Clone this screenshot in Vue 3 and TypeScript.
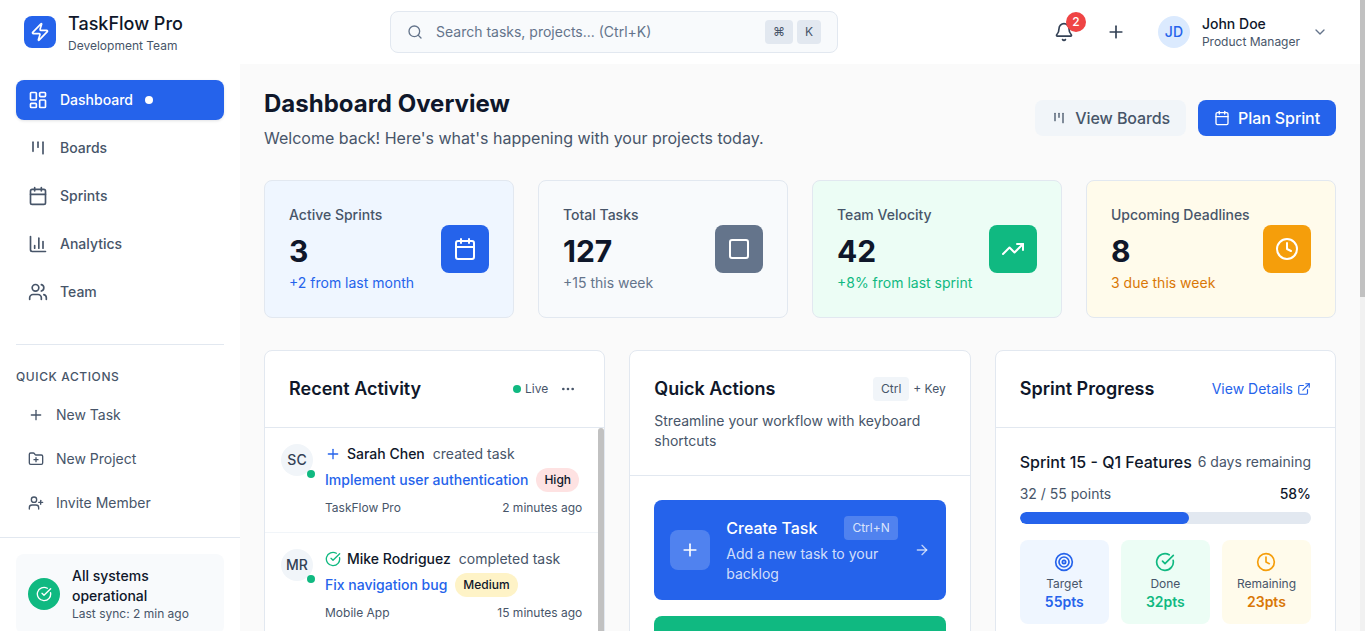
<script setup lang="ts">
const mainNav = [
  { label: 'Dashboard', icon: 'dash', active: true },
  { label: 'Boards', icon: 'boards', active: false },
  { label: 'Sprints', icon: 'calendar', active: false },
  { label: 'Analytics', icon: 'chart', active: false },
  { label: 'Team', icon: 'team', active: false },
]
const quick = [
  { label: 'New Task', icon: 'plus' },
  { label: 'New Project', icon: 'folder' },
  { label: 'Invite Member', icon: 'invite' },
]
const stats = [
  { label: 'Active Sprints', value: '3', note: '+2 from last month', tone: 'blue', icon: 'calendar' },
  { label: 'Total Tasks', value: '127', note: '+15 this week', tone: 'slate', icon: 'square' },
  { label: 'Team Velocity', value: '42', note: '+8% from last sprint', tone: 'green', icon: 'trend' },
  { label: 'Upcoming Deadlines', value: '8', note: '3 due this week', tone: 'amber', icon: 'clock' },
]
const activity = [
  { initials: 'SC', name: 'Sarah Chen', verb: 'created task', task: 'Implement user authentication', prio: 'High', prioClass: 'high', project: 'TaskFlow Pro', time: '2 minutes ago', icon: 'plus', tone: 'blue' },
  { initials: 'MR', name: 'Mike Rodriguez', verb: 'completed task', task: 'Fix navigation bug', prio: 'Medium', prioClass: 'medium', project: 'Mobile App', time: '15 minutes ago', icon: 'check', tone: 'green' },
]
const sprintStats = [
  { label: 'Target', value: '55pts', tone: 'blue', icon: 'target' },
  { label: 'Done', value: '32pts', tone: 'green', icon: 'check' },
  { label: 'Remaining', value: '23pts', tone: 'amber', icon: 'clock' },
]

const iconPaths: Record<string, string> = {
  dash: '<rect x="3" y="3" width="7" height="9" rx="1"/><rect x="14" y="3" width="7" height="5" rx="1"/><rect x="14" y="12" width="7" height="9" rx="1"/><rect x="3" y="16" width="7" height="5" rx="1"/>',
  boards: '<path d="M6 5v11"/><path d="M12 5v6"/><path d="M18 5v14"/>',
  calendar: '<path d="M8 2v4"/><path d="M16 2v4"/><rect x="3" y="4" width="18" height="18" rx="2"/><path d="M3 10h18"/>',
  chart: '<path d="M3 3v16a2 2 0 0 0 2 2h16"/><path d="M18 17V9"/><path d="M13 17V5"/><path d="M8 17v-3"/>',
  team: '<path d="M16 21v-2a4 4 0 0 0-4-4H6a4 4 0 0 0-4 4v2"/><circle cx="9" cy="7" r="4"/><path d="M22 21v-2a4 4 0 0 0-3-3.87"/><path d="M16 3.13a4 4 0 0 1 0 7.75"/>',
  plus: '<path d="M5 12h14"/><path d="M12 5v14"/>',
  folder: '<path d="M12 10v6"/><path d="M9 13h6"/><path d="M20 20a2 2 0 0 0 2-2V8a2 2 0 0 0-2-2h-7.9a2 2 0 0 1-1.69-.9L9.6 3.9A2 2 0 0 0 7.93 3H4a2 2 0 0 0-2 2v13a2 2 0 0 0 2 2Z"/>',
  invite: '<path d="M16 21v-2a4 4 0 0 0-4-4H6a4 4 0 0 0-4 4v2"/><circle cx="9" cy="7" r="4"/><path d="M19 8v6"/><path d="M22 11h-6"/>',
  square: '<rect x="3" y="3" width="18" height="18" rx="2"/>',
  trend: '<path d="m22 7-8.5 8.5-5-5L2 17"/><path d="M16 7h6v6"/>',
  clock: '<circle cx="12" cy="12" r="10"/><path d="M12 6v6l4 2"/>',
  check: '<path d="M21.8 10A10 10 0 1 1 17 3.34"/><path d="m9 11 3 3L22 4"/>',
  target: '<circle cx="12" cy="12" r="10"/><circle cx="12" cy="12" r="6"/><circle cx="12" cy="12" r="2"/>',
}
</script>

<template>
  <div class="app">
    <div class="page">
      <header class="topbar">
        <div class="brand">
          <div class="brand-mark">
            <svg width="20" height="20" viewBox="0 0 24 24" class="ico"><path d="M4 14a1 1 0 0 1-.78-1.63l9.9-10.2a.5.5 0 0 1 .86.46l-1.92 6.02A1 1 0 0 0 13 10h7a1 1 0 0 1 .78 1.63l-9.9 10.2a.5.5 0 0 1-.86-.46l1.92-6.02A1 1 0 0 0 11 14z"/></svg>
          </div>
          <div>
            <div class="brand-name">TaskFlow Pro</div>
            <div class="brand-sub">Development Team</div>
          </div>
        </div>
        <div class="search">
          <svg width="16" height="16" viewBox="0 0 24 24" class="ico search-ico"><path d="m21 21-4.34-4.34"/><circle cx="11" cy="11" r="8"/></svg>
          <span class="search-text">Search tasks, projects... (Ctrl+K)</span>
          <kbd class="key">⌘</kbd>
          <kbd class="key">K</kbd>
        </div>
        <div class="top-actions">
          <div class="bell">
            <svg width="20" height="20" viewBox="0 0 24 24" class="ico"><path d="M10.27 21a2 2 0 0 0 3.46 0"/><path d="M3.26 15.33A1 1 0 0 0 4 17h16a1 1 0 0 0 .74-1.67C19.41 13.96 18 12.5 18 8A6 6 0 0 0 6 8c0 4.5-1.41 5.96-2.74 7.33"/></svg>
            <span class="badge">2</span>
          </div>
          <svg width="20" height="20" viewBox="0 0 24 24" class="ico top-plus" v-html="iconPaths.plus"></svg>
          <div class="user">
            <div class="user-av">JD</div>
            <div>
              <div class="user-name">John Doe</div>
              <div class="user-role">Product Manager</div>
            </div>
            <svg width="16" height="16" viewBox="0 0 24 24" class="ico chev"><path d="m6 9 6 6 6-6"/></svg>
          </div>
        </div>
      </header>

      <div class="body">
        <aside class="sidebar">
          <nav class="nav">
            <a v-for="item in mainNav" :key="item.label" class="nav-item" :class="{ active: item.active }">
              <svg width="20" height="20" viewBox="0 0 24 24" class="ico" v-html="iconPaths[item.icon]"></svg>
              <span>{{ item.label }}</span>
              <i v-if="item.active" class="nav-dot"></i>
            </a>
          </nav>
          <div class="side-quick">
            <div class="side-title">QUICK ACTIONS</div>
            <a v-for="item in quick" :key="item.label" class="quick-item">
              <svg width="16" height="16" viewBox="0 0 24 24" class="ico" v-html="iconPaths[item.icon]"></svg>
              <span>{{ item.label }}</span>
            </a>
          </div>
          <div class="side-foot">
            <div class="status">
              <div class="status-ico">
                <svg width="16" height="16" viewBox="0 0 24 24" class="ico" v-html="iconPaths.check"></svg>
              </div>
              <div>
                <div class="status-title">All systems operational</div>
                <div class="status-sub">Last sync: 2 min ago</div>
              </div>
            </div>
          </div>
        </aside>

        <main class="main">
          <div class="page-head">
            <div>
              <h1>Dashboard Overview</h1>
              <p>Welcome back! Here's what's happening with your projects today.</p>
            </div>
            <div class="head-btns">
              <button class="btn ghost">
                <svg width="16" height="16" viewBox="0 0 24 24" class="ico" v-html="iconPaths.boards"></svg>
                View Boards
              </button>
              <button class="btn primary">
                <svg width="16" height="16" viewBox="0 0 24 24" class="ico" v-html="iconPaths.calendar"></svg>
                Plan Sprint
              </button>
            </div>
          </div>

          <section class="stats">
            <div v-for="s in stats" :key="s.label" class="stat" :class="s.tone">
              <div>
                <div class="stat-label">{{ s.label }}</div>
                <div class="stat-value">{{ s.value }}</div>
                <div class="stat-note">{{ s.note }}</div>
              </div>
              <div class="stat-ico">
                <svg width="24" height="24" viewBox="0 0 24 24" class="ico" v-html="iconPaths[s.icon]"></svg>
              </div>
            </div>
          </section>

          <section class="cards">
            <div class="card">
              <div class="card-head">
                <div class="head-row">
                  <h2>Recent Activity</h2>
                  <div class="live-wrap">
                    <span class="live"><i></i>Live</span>
                    <svg width="16" height="16" viewBox="0 0 24 24" class="ico more"><circle cx="12" cy="12" r="1"/><circle cx="19" cy="12" r="1"/><circle cx="5" cy="12" r="1"/></svg>
                  </div>
                </div>
              </div>
              <div class="feed">
                <div class="feed-list">
                  <div v-for="a in activity" :key="a.initials" class="feed-item">
                    <div class="feed-av">{{ a.initials }}<i></i></div>
                    <div class="feed-main">
                      <div class="feed-line">
                        <svg width="16" height="16" viewBox="0 0 24 24" class="ico" :class="'tone-' + a.tone" v-html="iconPaths[a.icon]"></svg>
                        <strong>{{ a.name }}</strong>
                        <span>{{ a.verb }}</span>
                      </div>
                      <div class="feed-task">
                        <a>{{ a.task }}</a>
                        <em :class="a.prioClass">{{ a.prio }}</em>
                      </div>
                      <div class="feed-meta">
                        <span>{{ a.project }}</span>
                        <span>{{ a.time }}</span>
                      </div>
                    </div>
                  </div>
                </div>
                <div class="feed-bar"></div>
              </div>
            </div>

            <div class="card">
              <div class="card-head">
                <div class="head-row">
                  <h2>Quick Actions</h2>
                  <div class="hint"><kbd>Ctrl</kbd><span>+ Key</span></div>
                </div>
                <p class="card-desc">Streamline your workflow with keyboard shortcuts</p>
              </div>
              <div class="actions">
                <div class="action blue">
                  <div class="action-ico">
                    <svg width="20" height="20" viewBox="0 0 24 24" class="ico" v-html="iconPaths.plus"></svg>
                  </div>
                  <div class="action-text">
                    <div class="action-top"><strong>Create Task</strong><kbd>Ctrl+N</kbd></div>
                    <div class="action-sub">Add a new task to your backlog</div>
                  </div>
                  <svg width="16" height="16" viewBox="0 0 24 24" class="ico arrow"><path d="M5 12h14"/><path d="m12 5 7 7-7 7"/></svg>
                </div>
                <div class="action green"></div>
              </div>
            </div>

            <div class="card">
              <div class="card-head">
                <div class="head-row">
                  <h2>Sprint Progress</h2>
                  <a class="details">View Details
                    <svg width="14" height="14" viewBox="0 0 24 24" class="ico"><path d="M15 3h6v6"/><path d="M10 14 21 3"/><path d="M18 13v6a2 2 0 0 1-2 2H5a2 2 0 0 1-2-2V8a2 2 0 0 1 2-2h6"/></svg>
                  </a>
                </div>
              </div>
              <div class="sprint">
                <div class="sprint-top">
                  <strong>Sprint 15 - Q1 Features</strong>
                  <span>6 days remaining</span>
                </div>
                <div class="points">
                  <span>32 / 55 points</span>
                  <b>58%</b>
                </div>
                <div class="bar"><div class="bar-fill" :style="{ width: '58%' }"></div></div>
                <div class="mini-grid">
                  <div v-for="m in sprintStats" :key="m.label" class="mini" :class="m.tone">
                    <svg width="20" height="20" viewBox="0 0 24 24" class="ico" v-html="iconPaths[m.icon]"></svg>
                    <div class="mini-label">{{ m.label }}</div>
                    <div class="mini-value">{{ m.value }}</div>
                  </div>
                </div>
              </div>
            </div>
          </section>
        </main>
      </div>
    </div>
    <div class="page-bar"><div class="page-thumb"></div></div>
  </div>
</template>

<style>
html, body { margin: 0; background: #fafafa; overflow: hidden; }
</style>

<style scoped>
.app { height: 100vh; display: flex; overflow: hidden; font-family: Inter, 'Liberation Sans', sans-serif; color: #0f172a; font-size: 14px; line-height: 20px; }
.page { flex: 1; min-width: 0; overflow: hidden; }
.page-bar { width: 5px; flex-shrink: 0; background: #f1f1f1; }
.page-thumb { height: 297px; background: #c1c1c1; }
.ico { fill: none; stroke: currentColor; stroke-width: 2; stroke-linecap: round; stroke-linejoin: round; flex-shrink: 0; }
kbd { font-family: inherit; }
h1, h2, p { margin: 0; }

.topbar { height: 64px; box-sizing: border-box; background: #fff; display: flex; align-items: center; padding: 0 24px; }
.brand { display: flex; align-items: center; gap: 12px; width: 366px; flex-shrink: 0; }
.brand-mark { width: 32px; height: 32px; border-radius: 8px; background: #2563eb; color: #fff; display: flex; align-items: center; justify-content: center; }
.brand-name { font-size: 18px; font-weight: 500; line-height: 28px; }
.brand-sub { font-size: 12px; line-height: 16px; color: #475569; }
.search { width: 448px; height: 42px; box-sizing: border-box; border: 1px solid #e2e8f0; border-radius: 8px; background: #f8fafc; display: flex; align-items: center; padding: 0 16px; gap: 4px; }
.search-ico { color: #64748b; margin-right: 9px; }
.search-text { flex: 1; font-size: 14px; color: #64748b; }
.key { background: #e2e8f0; color: #475569; font-size: 12px; height: 24px; padding: 0 8px; box-sizing: border-box; border-radius: 4px; display: flex; align-items: center; justify-content: center; }
.top-actions { margin-left: auto; display: flex; align-items: center; }
.bell { position: relative; color: #334155; display: flex; }
.badge { position: absolute; top: -10px; right: -12px; width: 20px; height: 20px; border-radius: 50%; background: #ef4444; color: #fff; font-size: 12px; font-weight: 500; display: flex; align-items: center; justify-content: center; }
.top-plus { color: #334155; margin-left: 32px; }
.user { display: flex; align-items: center; gap: 12px; margin-left: 24px; padding: 0 8px; }
.user-av { width: 32px; height: 32px; border-radius: 50%; background: #dbeafe; color: #2563eb; font-size: 14px; font-weight: 500; display: flex; align-items: center; justify-content: center; }
.user-name { font-size: 14px; font-weight: 500; line-height: 18px; }
.user-role { font-size: 12px; line-height: 17px; color: #475569; }
.chev { color: #64748b; }

.body { display: flex; align-items: flex-start; }
.sidebar { width: 240px; flex-shrink: 0; height: calc(100vh - 64px); box-sizing: border-box; background: #fff; overflow: hidden; display: flex; flex-direction: column; }
.nav { padding: 16px 16px 32px; display: flex; flex-direction: column; gap: 8px; }
.nav-item { height: 40px; box-sizing: border-box; padding: 0 12px; display: flex; align-items: center; gap: 12px; border-radius: 8px; color: #475569; font-size: 14px; font-weight: 500; }
.nav-item.active { background: #2563eb; color: #fff; box-shadow: 0 1px 3px rgba(15, 23, 42, 0.12); }
.nav-dot { width: 8px; height: 8px; border-radius: 50%; background: #fff; }
.side-quick { margin: 0 16px; border-top: 1px solid #e2e8f0; padding-top: 24px; }
.side-title { font-size: 12px; font-weight: 500; letter-spacing: 0.6px; color: #475569; line-height: 16px; margin-bottom: 12px; }
.quick-item { height: 36px; margin-bottom: 8px; padding: 0 12px; display: flex; align-items: center; gap: 12px; color: #475569; font-size: 14px; }
.side-foot { margin-top: 8px; border-top: 1px solid #e2e8f0; padding: 16px; }
.status { background: #f8fafc; border-radius: 8px; padding: 12px; display: flex; align-items: center; gap: 12px; }
.status-ico { width: 32px; height: 32px; border-radius: 50%; background: #10b981; color: #fff; display: flex; align-items: center; justify-content: center; flex-shrink: 0; }
.status-title { font-size: 14px; font-weight: 500; line-height: 20px; }
.status-sub { font-size: 12px; line-height: 16px; color: #475569; }

.main { flex: 1; min-width: 0; padding: 24px; background: #fafafa; }
.page-head { display: flex; justify-content: space-between; align-items: flex-start; margin-bottom: 30px; }
h1 { font-size: 24px; font-weight: 700; line-height: 32px; }
.page-head p { font-size: 16px; line-height: 24px; color: #475569; margin-top: 6px; }
.head-btns { display: flex; gap: 12px; margin-top: 12px; }
.btn { height: 36px; border: 0; border-radius: 8px; padding: 0 16px; font: 450 16px Inter, 'Liberation Sans', sans-serif; letter-spacing: -0.1px; display: flex; align-items: center; gap: 8px; }
.btn.ghost { background: #f1f5f9; color: #475569; }
.btn.primary { background: #2563eb; color: #fff; }

.stats { display: grid; grid-template-columns: repeat(4, 1fr); gap: 24px; margin-bottom: 32px; }
.stat { height: 138px; box-sizing: border-box; border: 1px solid #e2e8f0; border-radius: 8px; padding: 24px; display: flex; justify-content: space-between; align-items: center; }
.stat.blue { background: #eff6ff; }
.stat.slate { background: #f8fafc; }
.stat.green { background: #ecfdf5; }
.stat.amber { background: #fffbeb; }
.stat-label { font-size: 14px; font-weight: 500; line-height: 20px; color: #475569; }
.stat-value { font-size: 30px; font-weight: 700; line-height: 36px; margin: 8px 0 4px; }
.stat-note { font-size: 14px; line-height: 20px; }
.stat.blue .stat-note { color: #2563eb; }
.stat.slate .stat-note { color: #64748b; }
.stat.green .stat-note { color: #10b981; }
.stat.amber .stat-note { color: #d97706; }
.stat-ico { width: 48px; height: 48px; border-radius: 8px; color: #fff; display: flex; align-items: center; justify-content: center; }
.stat.blue .stat-ico { background: #2563eb; }
.stat.slate .stat-ico { background: #64748b; }
.stat.green .stat-ico { background: #10b981; }
.stat.amber .stat-ico { background: #f59e0b; }

.cards { display: grid; grid-template-columns: repeat(3, 1fr); gap: 24px; align-items: start; }
.card { background: #fff; border: 1px solid #e2e8f0; border-radius: 8px; }
.card-head { padding: 24px; border-bottom: 1px solid #e2e8f0; }
.head-row { display: flex; align-items: center; justify-content: space-between; height: 28px; }
h2 { font-size: 18px; font-weight: 600; line-height: 28px; }
.live-wrap { display: flex; align-items: center; gap: 12px; margin-right: 4px; }
.live { display: flex; align-items: center; gap: 4px; font-size: 12px; color: #475569; }
.live i { width: 8px; height: 8px; border-radius: 50%; background: #10b981; }
.more { color: #475569; }
.hint { display: flex; align-items: center; gap: 4px; font-size: 12px; color: #475569; }
.hint kbd { background: #f1f5f9; border-radius: 4px; height: 24px; padding: 0 8px; display: flex; align-items: center; }
.card-desc { font-size: 14px; line-height: 20px; color: #475569; margin-top: 8px; }

.feed { height: 400px; display: flex; overflow: hidden; }
.feed-list { flex: 1; min-width: 0; }
.feed-bar { width: 6px; height: 300px; flex-shrink: 0; background: #c1c1c1; border-radius: 3px; }
.feed-item { display: flex; gap: 12px; box-sizing: border-box; padding: 16px 16px 0; border-bottom: 1px solid #f1f5f9; height: 105px; }
.feed-av { position: relative; width: 32px; height: 32px; border-radius: 50%; background: #f1f5f9; color: #334155; font-size: 14px; font-weight: 500; display: flex; align-items: center; justify-content: center; flex-shrink: 0; }
.feed-av i { position: absolute; right: -2px; bottom: -2px; width: 8px; height: 8px; border-radius: 50%; background: #10b981; }
.feed-main { flex: 1; min-width: 0; }
.feed-line { display: flex; align-items: center; gap: 6px; height: 20px; font-size: 14px; color: #475569; }
.feed-line strong { font-weight: 500; color: #0f172a; margin-right: 2px; }
.tone-blue { color: #2563eb; }
.tone-green { color: #10b981; }
.feed-task { display: flex; align-items: center; gap: 8px; margin-top: 4px; height: 24px; }
.feed-task a { color: #2563eb; font-size: 14px; font-weight: 500; }
.feed-task em { font-style: normal; font-size: 12px; font-weight: 500; height: 24px; padding: 0 8px; border-radius: 12px; display: flex; align-items: center; }
.high { background: #fee2e2; }
.medium { background: #fef3c7; }
.feed-meta { display: flex; justify-content: space-between; margin-top: 8px; font-size: 12px; line-height: 16px; color: #475569; }

.actions { padding: 24px; display: flex; flex-direction: column; gap: 16px; }
.action { height: 100px; box-sizing: border-box; border-radius: 8px; color: #fff; padding: 0 16px; display: flex; align-items: center; gap: 16px; }
.action.blue { background: #2563eb; }
.action.green { background: #10b981; }
.action-ico { width: 40px; height: 40px; border-radius: 8px; background: rgba(255, 255, 255, 0.2); display: flex; align-items: center; justify-content: center; flex-shrink: 0; }
.action-text { flex: 1; min-width: 0; }
.action-top { display: flex; align-items: center; gap: 27px; height: 24px; }
.action-top strong { font-size: 16px; font-weight: 500; white-space: nowrap; }
.action-top kbd { background: rgba(255, 255, 255, 0.2); color: rgba(255, 255, 255, 0.8); font-size: 12px; height: 24px; padding: 0 8px; border-radius: 4px; display: flex; align-items: center; flex-shrink: 0; }
.action-sub { font-size: 14px; line-height: 20px; color: rgba(255, 255, 255, 0.8); margin-top: 4px; }
.arrow { color: rgba(255, 255, 255, 0.7); }

.details { display: flex; align-items: center; gap: 4px; color: #2563eb; font-size: 14px; }
.sprint { padding: 24px; }
.sprint-top { display: flex; justify-content: space-between; align-items: center; }
.sprint-top strong { font-size: 16px; font-weight: 500; }
.sprint-top span, .points span { font-size: 14px; color: #475569; }
.points { display: flex; justify-content: space-between; align-items: center; margin-top: 12px; line-height: 20px; }
.points b { font-size: 14px; font-weight: 500; }
.bar { height: 12px; background: #e2e8f0; border-radius: 6px; margin-top: 8px; overflow: hidden; }
.bar-fill { height: 100%; background: #2563eb; border-radius: 6px; }
.mini-grid { display: grid; grid-template-columns: repeat(3, 1fr); gap: 12px; margin-top: 16px; }
.mini { height: 84px; box-sizing: border-box; border-radius: 8px; padding-top: 12px; text-align: center; }
.mini svg { display: block; margin: 0 auto 4px; }
.mini.blue { background: #eff6ff; color: #2563eb; }
.mini.green { background: #ecfdf5; color: #10b981; }
.mini.amber { background: #fffbeb; color: #f59e0b; }
.mini-label { font-size: 12px; line-height: 16px; color: #475569; }
.mini-value { font-size: 14px; font-weight: 600; line-height: 20px; }
.mini.amber .mini-value { color: #d97706; }
</style>
